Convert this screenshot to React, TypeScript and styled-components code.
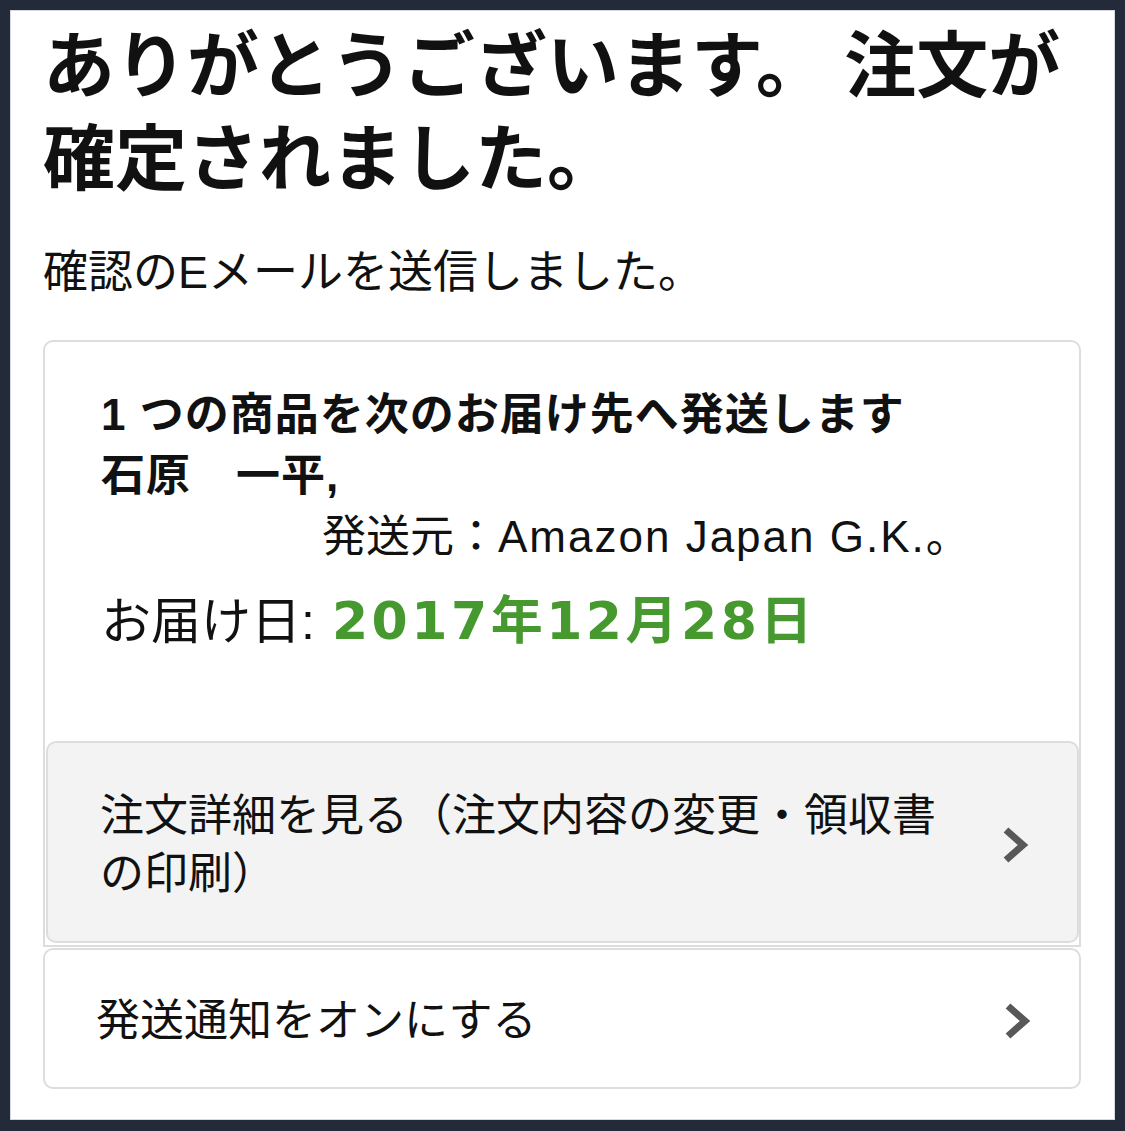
import React from "react";
import styled, { createGlobalStyle } from "styled-components";

const GlobalStyle = createGlobalStyle`
  html, body {
    margin: 0;
    padding: 0;
    background: #232b3b;
  }
  body {
    font-family: "Liberation Sans", "Noto Sans CJK JP", sans-serif;
    color: #111;
  }
`;

const Frame = styled.div`
  margin: 10px 10px 12px 10px;
  background: #fff;
  box-shadow: inset 0 0 0 1px #d6d9de;
  padding: 3px 34px 31px 33px;
`;

const Title = styled.h1`
  margin: 0;
  font-family: "Noto Sans CJK JP", sans-serif;
  font-size: 72px;
  font-weight: 700;
  line-height: 93px;
  color: #111;
`;

const Sub = styled.p`
  margin: 44px 0 0 0;
  font-size: 45px;
  line-height: 59px;
  color: #111;
`;

const Card = styled.div<{ $square?: boolean }>`
  border: 2px solid #dddddd;
  border-radius: ${(p) => (p.$square ? "10px 10px 0 0" : "10px")};
  background: #fff;
`;

const OrderCard = styled(Card)`
  margin-top: 38px;
  padding: 0 0 2px 1px;
`;

const Summary = styled.div`
  padding: 42px 40px 84px 55px;
`;

const Strong = styled.div`
  font-size: 44px;
  font-weight: 700;
  line-height: 61px;
  letter-spacing: 1px;
`;

const ShipFrom = styled.div`
  font-size: 44px;
  line-height: 61px;
  margin-left: 221px;
`;

const Latin = styled.span`
  letter-spacing: 2px;
`;

const Delivery = styled.div`
  margin-top: 19px;
  font-size: 50px;
  line-height: 70px;
`;

const DateText = styled.span`
  margin-left: 17px;
  font-family: "DejaVu Sans", "Noto Sans CJK JP", sans-serif;
  font-size: 52px;
  letter-spacing: 3.5px;
  color: #46992e;
  font-weight: 700;
`;

const RowButton = styled.div<{ $gray?: boolean }>`
  display: flex;
  align-items: center;
  gap: 43px;
  background: ${(p) => (p.$gray ? "#f3f3f3" : "#fff")};
  border: ${(p) => (p.$gray ? "2px solid #dddddd" : "none")};
  border-radius: 10px;
  padding: ${(p) => (p.$gray ? "44px 48px 38px 52px" : "42px 48px 37px 51px")};
  cursor: pointer;
`;

const RowLabel = styled.div`
  flex: 1;
  font-size: 44px;
  line-height: 58px;
  color: #111;
`;

const NotifyCard = styled(Card)`
  margin-top: 1px;
`;

const Chevron = () => (
  <svg width="27" height="38" viewBox="0 0 27 38" style={{ flexShrink: 0 }}>
    <polyline
      points="4,4 21,19 4,34"
      fill="none"
      stroke="#585858"
      strokeWidth="7"
      strokeLinejoin="miter"
    />
  </svg>
);

export default function App() {
  return (
    <>
      <GlobalStyle />
      <Frame>
        <Title>ありがとうございます。 注文が確定されました。</Title>
        <Sub>確認のEメールを送信しました。</Sub>
        <OrderCard $square>
          <Summary>
            <Strong>1 つの商品を次のお届け先へ発送します</Strong>
            <Strong>石原　一平,</Strong>
            <ShipFrom>
              発送元：<Latin>Amazon Japan G.K.</Latin>。
            </ShipFrom>
            <Delivery>
              お届け日:<DateText>2017年12月28日</DateText>
            </Delivery>
          </Summary>
          <RowButton $gray>
            <RowLabel>注文詳細を見る（注文内容の変更・領収書の印刷）</RowLabel>
            <Chevron />
          </RowButton>
        </OrderCard>
        <NotifyCard>
          <RowButton>
            <RowLabel>発送通知をオンにする</RowLabel>
            <Chevron />
          </RowButton>
        </NotifyCard>
      </Frame>
    </>
  );
}
